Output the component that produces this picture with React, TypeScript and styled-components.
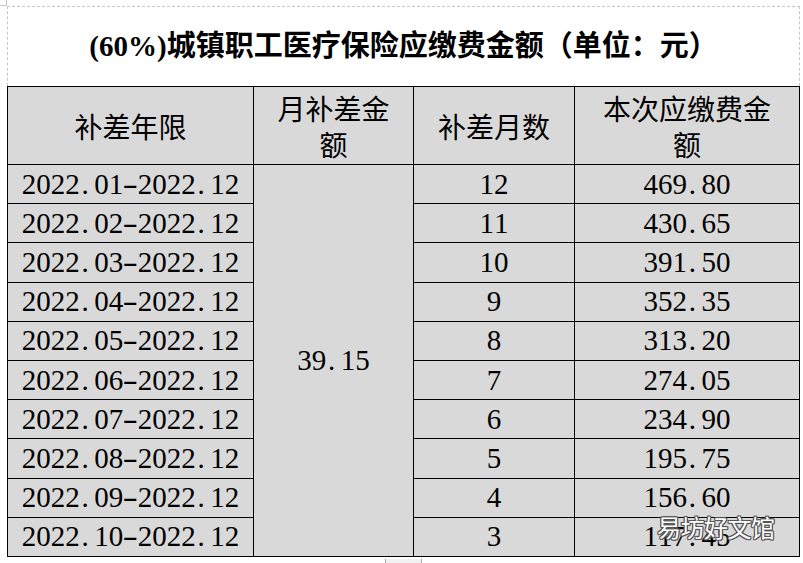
import React from "react";
import styled, { createGlobalStyle } from "styled-components";

const GlobalStyle = createGlobalStyle`
  html, body { margin: 0; padding: 0; background: #ffffff; }
  body { font-family: "Liberation Serif", "Noto Sans CJK SC", serif; color: #000; }
`;

const Page = styled.div`
  position: relative;
  width: 803px;
  height: 563px;
  padding: 6px 0 0 7px;
  box-sizing: border-box;
  overflow: hidden;
`;

const TitleBox = styled.div`
  position: relative;
  width: 793px;
  height: 80px;
  box-sizing: border-box;
  border: 1px dashed #c6c6c6;
  border-bottom: none;
  display: flex;
  align-items: center;
  justify-content: center;
  &::before {
    content: "";
    position: absolute;
    left: -8px;
    top: -7px;
    width: 6px;
    height: 5px;
    border-right: 1px solid #c6c6c6;
    border-bottom: 1px solid #c6c6c6;
  }
`;

const Title = styled.h1`
  margin: 0;
  font-family: "Liberation Serif", "Noto Sans CJK SC", serif;
  font-size: 29px;
  font-weight: 700;
  line-height: 1;
  letter-spacing: 0;
  white-space: nowrap;
`;

const Sheet = styled.div`
  display: grid;
  width: 793px;
  box-sizing: border-box;
  grid-template-columns: 245px 159px 160px 224px;
  grid-template-rows: 77px repeat(10, 38.2px);
  gap: 1px;
  background: #000;
  border: 1px solid #000;
`;

const Cell = styled.div<{ $col: number; $span?: number }>`
  grid-column: ${(p) => p.$col};
  ${(p) => (p.$span ? `grid-row: span ${p.$span};` : "")}
  background: #d9d9d9;
  display: flex;
  align-items: center;
  justify-content: center;
  text-align: center;
  overflow: hidden;
`;

const HeadText = styled.span`
  font-family: "Noto Sans CJK SC", sans-serif;
  font-size: 28px;
  font-weight: 400;
  line-height: 36px;
`;

const NumText = styled.span`
  font-family: "Liberation Serif", serif;
  font-size: 29px;
  line-height: 1;
  white-space: nowrap;
  display: inline-flex;
`;

const Glyph = styled.span<{ $kind: "dot" | "dash" | "digit" }>`
  display: inline-block;
  width: 0.5em;
  box-sizing: border-box;
  text-align: ${(p) => (p.$kind === "dot" ? "left" : "center")};
  ${(p) => (p.$kind === "dot" ? "padding-left: 0.06em;" : "")}
  ${(p) => (p.$kind === "dash" ? "transform: scaleX(1.6);" : "")}
`;

const Watermark = styled.div`
  position: absolute;
  left: 657px;
  top: 515px;
  font-family: "Noto Sans CJK SC", sans-serif;
  font-size: 24px;
  line-height: 1;
  color: #ffffff;
  letter-spacing: -0.5px;
  text-shadow:
    1px 0 0 #555, -1px 0 0 #555, 0 1px 0 #555, 0 -1px 0 #555,
    1px 1px 0 #555, -1px -1px 0 #555, 1px -1px 0 #555, -1px 1px 0 #555,
    0 0 2px #999;
`;

const Footer = styled.div`
  width: 793px;
  display: flex;
  justify-content: center;
  margin-top: 2px;
`;

const PageTab = styled.div`
  width: 35px;
  height: 5px;
  background: #f2f2f2;
  border-left: 1px solid #a8a8a8;
  border-right: 1px solid #a8a8a8;
`;

const kindOf = (c: string): "dot" | "dash" | "digit" =>
  c === "." ? "dot" : c === "-" ? "dash" : "digit";

const Num: React.FC<{ text: string }> = ({ text }) => (
  <NumText>
    {text.split("").map((c, i) => (
      <Glyph key={i} $kind={kindOf(c)}>
        {c}
      </Glyph>
    ))}
  </NumText>
);

const rows = [
  ["01", "12", "469.80"],
  ["02", "11", "430.65"],
  ["03", "10", "391.50"],
  ["04", "9", "352.35"],
  ["05", "8", "313.20"],
  ["06", "7", "274.05"],
  ["07", "6", "234.90"],
  ["08", "5", "195.75"],
  ["09", "4", "156.60"],
  ["10", "3", "117.45"],
];

export default function App() {
  return (
    <>
      <GlobalStyle />
      <Page>
        <TitleBox>
          <Title>(60%)城镇职工医疗保险应缴费金额（单位：元）</Title>
        </TitleBox>
        <Sheet>
          <Cell $col={1}>
            <HeadText>补差年限</HeadText>
          </Cell>
          <Cell $col={2}>
            <HeadText>
              月补差金
              <br />额
            </HeadText>
          </Cell>
          <Cell $col={3}>
            <HeadText>补差月数</HeadText>
          </Cell>
          <Cell $col={4}>
            <HeadText>
              本次应缴费金
              <br />额
            </HeadText>
          </Cell>
          {rows.map(([m, n, amt], i) => (
            <React.Fragment key={m}>
              <Cell $col={1}>
                <Num text={`2022.${m}-2022.12`} />
              </Cell>
              {i === 0 && (
                <Cell $col={2} $span={10}>
                  <Num text="39.15" />
                </Cell>
              )}
              <Cell $col={3}>
                <Num text={n} />
              </Cell>
              <Cell $col={4}>
                <Num text={amt} />
              </Cell>
            </React.Fragment>
          ))}
        </Sheet>
        <Footer>
          <PageTab />
        </Footer>
        <Watermark>易坊好文馆</Watermark>
      </Page>
    </>
  );
}
